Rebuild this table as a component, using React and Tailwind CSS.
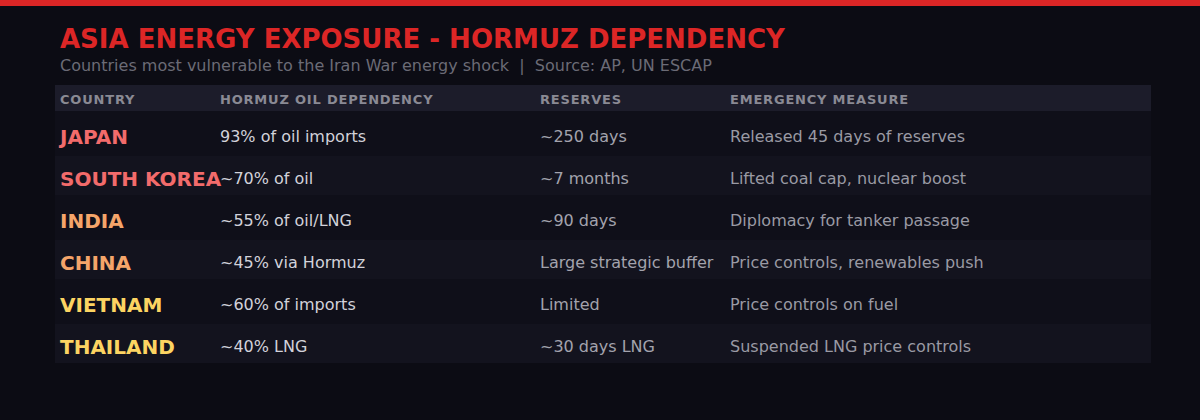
import React from "react";

const rows = [
  { country: "JAPAN", color: "text-[#f26b6b]", dep: "93% of oil imports", reserves: "~250 days", measure: "Released 45 days of reserves" },
  { country: "SOUTH KOREA", color: "text-[#f26b6b]", dep: "~70% of oil", reserves: "~7 months", measure: "Lifted coal cap, nuclear boost" },
  { country: "INDIA", color: "text-[#f5a56a]", dep: "~55% of oil/LNG", reserves: "~90 days", measure: "Diplomacy for tanker passage" },
  { country: "CHINA", color: "text-[#f5a56a]", dep: "~45% via Hormuz", reserves: "Large strategic buffer", measure: "Price controls, renewables push" },
  { country: "VIETNAM", color: "text-[#fcd462]", dep: "~60% of imports", reserves: "Limited", measure: "Price controls on fuel" },
  { country: "THAILAND", color: "text-[#fcd462]", dep: "~40% LNG", reserves: "~30 days LNG", measure: "Suspended LNG price controls" },
];

const App = () => {
  return (
    <div className="w-[1200px] h-[420px] bg-[#0c0c14] font-['DejaVu_Sans',sans-serif] overflow-hidden">
      <div className="h-[6px] bg-[#dc2626]" />
      <div className="px-[55px]">
        {/* Title */}
        <div className="pl-[5px] pt-[17px]">
          <h1 className="text-[26px] leading-[32px] font-bold text-[#dc2626]">
            ASIA ENERGY EXPOSURE - HORMUZ DEPENDENCY
          </h1>
          <p className="mt-[1px] text-[16px] leading-[20px] text-[#6b6b76] whitespace-pre">
            Countries most vulnerable to the Iran War energy shock  |  Source: AP, UN ESCAP
          </p>
        </div>

        {/* Table */}
        <div className="mt-[9px] w-[1096px]">
          <div className="flex h-[26px] items-center pt-[3px] bg-[#1c1c2a] text-[13px] font-bold tracking-[0.8px] text-[#8a8a94]">
            <div className="w-[160px] pl-[5px]">COUNTRY</div>
            <div className="w-[320px] pl-[5px]">HORMUZ OIL DEPENDENCY</div>
            <div className="w-[190px] pl-[5px]">RESERVES</div>
            <div className="flex-1 pl-[5px]">EMERGENCY MEASURE</div>
          </div>
          {rows.map((r, i) => (
            <div
              key={r.country}
              className={
                i % 2 === 0
                  ? "flex h-[45px] items-center pt-[6px] bg-[#0f0f19]"
                  : "flex h-[39px] items-center pt-[6px] bg-[#13131e]"
              }
            >
              <div className={`w-[160px] pl-[5px] text-[20px] font-bold whitespace-nowrap ${r.color}`}>
                {r.country}
              </div>
              <div className="w-[320px] pl-[5px] text-[16px] text-[#d2d2da]">{r.dep}</div>
              <div className="w-[190px] pl-[5px] text-[16px] text-[#a3a3ad]">{r.reserves}</div>
              <div className="flex-1 pl-[5px] text-[16px] text-[#9a9aa4]">{r.measure}</div>
            </div>
          ))}
        </div>
      </div>
    </div>
  );
};

export default App;
